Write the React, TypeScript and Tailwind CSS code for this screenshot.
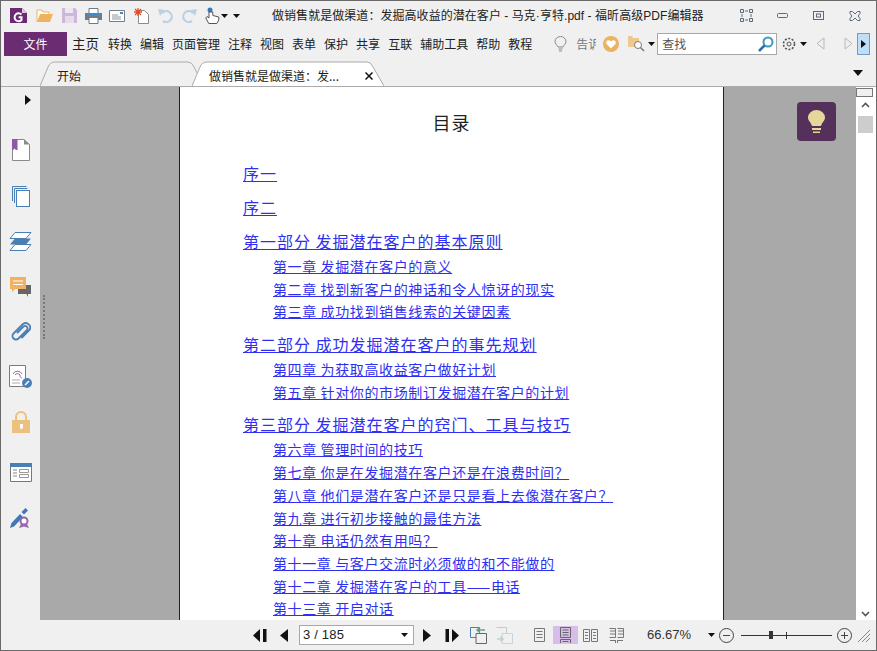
import React from "react";

const Caret = ({ className = "" }: { className?: string }) => (
  <svg width="7" height="4" viewBox="0 0 7 4" className={className}><path d="M0 0h7L3.500 4z" fill="#111" /></svg>
);

const Logo = () => (
  <svg width="17" height="17" viewBox="0 0 17 17"><path d="M0 1h12l5 5v10H0z" fill="#6b2a72" /><path d="M12 1v5h5z" fill="#d9c6dd" /><path d="M11.500 7.500a4 4 0 1 0 0 5.500V10.200H8.600" fill="none" stroke="#fff" strokeWidth="2" /></svg>
);
const Folder = () => (
  <svg width="17" height="14" viewBox="0 0 17 14"><path d="M1 13V1h5l1 2h6v2" fill="#fff" stroke="#e8b665" /><path d="M1 13l3-8h13l-3 8z" fill="#efb35f" /></svg>
);
const Save = () => (
  <svg width="15" height="15" viewBox="0 0 15 15"><path d="M0 0h13l2 2v13H0z" fill="#cdb8dc" /><path d="M3 0h8v5H3z" fill="#efe8f3" /><path d="M3 8h9v7H3z" fill="#e6dcec" /></svg>
);
const Printer = () => (
  <svg width="17" height="16" viewBox="0 0 17 16"><path d="M4 .5h9v5H4z" fill="#fff" stroke="#6d7a88" /><path d="M0 5h17v7H0z" fill="#717c88" /><path d="M3 6h11v1.500H3z" fill="#3f8fd0" /><path d="M4 9.500h9v6H4z" fill="#fff" stroke="#6d7a88" /></svg>
);
const Mail = () => (
  <svg width="16" height="12" viewBox="0 0 16 12"><path d="M.5.500h15v11H.5z" fill="#fff" stroke="#747e88" /><path d="M3 5h6M3 7h9M3 9h9" stroke="#8c96a0" /><path d="M11 2h3v2h-3z" fill="#4a86c4" /></svg>
);
const Spark = () => (
  <svg width="15" height="16" viewBox="0 0 15 16"><path d="M4.500 2.500h6l4 4v9h-10z" fill="#fff" stroke="#8b8b8b" /><path d="M4 0v8M0 4h8M1 1l6 6M7 1L1 7" stroke="#e2502a" strokeWidth="1.300" /></svg>
);
const Undo = ({ flip = false }: { flip?: boolean }) => (
  <svg width="16" height="15" viewBox="0 0 16 15" className={flip ? "-scale-x-100" : ""}><path d="M4 5a5.500 5.500 0 1 1 1 8" fill="none" stroke="#b9d0e5" strokeWidth="2.200" /><path d="M0 1l6.500 1L2 8z" fill="#b9d0e5" /></svg>
);
const Hand = () => (
  <svg width="15" height="18" viewBox="0 0 15 18"><circle cx="5" cy="3" r="2.500" fill="#3a78bd" /><path d="M4 5v6L2 9.500 0.800 11l3 5.500h8l2-3.500v-3l-6-1.500V5z" fill="#fff" stroke="#555" /></svg>
);
const Bulb = () => (
  <svg width="13" height="16" viewBox="0 0 13 16"><path d="M4 11C3 8.500 1 8 1 5.500a5.500 5 0 0 1 11 0C12 8 10 8.500 9 11zM4.500 13h4M5 15h3" fill="none" stroke="#8a8a8a" /></svg>
);
const Heart = () => (
  <svg width="16" height="16" viewBox="0 0 16 16"><circle cx="8" cy="8" r="8" fill="#ecb25f" /><path d="M8 12.500L3.500 8C2 5 6 3 8 5.500 10 3 14 5 12.500 8z" fill="#fff" /></svg>
);
const FolderSearch = () => (
  <svg width="17" height="17" viewBox="0 0 17 17"><path d="M0 1h4l1 2h6v9H0z" fill="#eec88f" /><circle cx="10" cy="10" r="3.500" fill="#fff" stroke="#777" /><path d="M12.500 12.500L16 16" stroke="#777" strokeWidth="1.500" /></svg>
);
const Magnifier = () => (
  <svg width="16" height="16" viewBox="0 0 16 16"><circle cx="10" cy="6" r="4.500" fill="#fff" stroke="#3a9ac4" strokeWidth="2" /><path d="M6.500 9.500L1 15" stroke="#2f6ca8" strokeWidth="2.500" /></svg>
);
const Gear = () => (
  <svg width="14" height="14" viewBox="0 0 14 14"><circle cx="7" cy="7" r="2" fill="none" stroke="#555" /><circle cx="7" cy="7" r="5.500" fill="none" stroke="#555" strokeWidth="1.600" strokeDasharray="2 1.500" /></svg>
);
const Tri = ({ d, fill, stroke }: { d: string; fill: string; stroke?: string }) => (
  <svg width="9" height="13" viewBox="0 0 9 13"><path d={d} fill={fill} stroke={stroke} /></svg>
);
const MenuItem = ({ t }: { t: string }) => <span className="text-[12px] text-[#222]">{t}</span>;

const Tab = ({ w, active, children }: { w: string; active?: boolean; children: React.ReactNode }) => (
  <div className={`relative h-[25px] flex items-center shrink-0 pt-[5px] ${w}`}>
    {active ? (
      <svg className="absolute inset-0" width="192" height="25" viewBox="0 0 192 25"><path d="M0 25L8 6Q10 1 15 1H175Q179 1 181 6L192 25z" fill="#fff" /><path d="M0 25L8 6Q10 1 15 1H175Q179 1 181 6L192 25" fill="none" stroke="#ababab" /></svg>
    ) : (
      <svg className="absolute inset-0" width="157" height="25" viewBox="0 0 157 25"><path d="M0 25L8 6Q10 1 15 1H148Q152 1 154 6L157 12" fill="none" stroke="#ababab" /></svg>
    )}
    <div className="relative w-full flex items-center">{children}</div>
  </div>
);

const SideBtn = ({ children, mt }: { children: React.ReactNode; mt: string }) => (
  <div className={`flex items-center justify-center w-full h-[30px] shrink-0 ${mt}`}>{children}</div>
);

const parts = [
  { t: "序一", k: "p", m: "" }, { t: "序二", k: "p", m: "mt-[9px]" },
  { t: "第一部分 发掘潜在客户的基本原则", k: "p", m: "mt-[9px]" },
  { t: "第一章 发掘潜在客户的意义", k: "c" }, { t: "第二章 找到新客户的神话和令人惊讶的现实", k: "c" }, { t: "第三章 成功找到销售线索的关键因素", k: "c" },
  { t: "第二部分 成功发掘潜在客户的事先规划", k: "p", m: "mt-[10px]" },
  { t: "第四章 为获取高收益客户做好计划", k: "c" }, { t: "第五章 针对你的市场制订发掘潜在客户的计划", k: "c" },
  { t: "第三部分 发掘潜在客户的窍门、工具与技巧", k: "p", m: "mt-[10px]" },
  { t: "第六章 管理时间的技巧", k: "c" }, { t: "第七章 你是在发掘潜在客户还是在浪费时间？", k: "c" }, { t: "第八章 他们是潜在客户还是只是看上去像潜在客户？", k: "c" },
  { t: "第九章 进行初步接触的最佳方法", k: "c" }, { t: "第十章 电话仍然有用吗？", k: "c" }, { t: "第十一章 与客户交流时必须做的和不能做的", k: "c" },
  { t: "第十二章 发掘潜在客户的工具——电话", k: "c" }, { t: "第十三章 开启对话", k: "c" },
];

export default function App() {
  return (
    <div className="w-[877px] h-[651px] overflow-hidden border border-[#6a6a6a] bg-[#f0f0f0] flex flex-col text-[#222]" style={{ fontFamily: '"Noto Sans CJK SC", sans-serif' }}>
      {/* title bar */}
      <div className="h-[29px] shrink-0 flex items-center relative">
        <div className="ml-[9px] flex items-center">
          <Logo />
          <div className="ml-[9px]"><Folder /></div>
          <div className="ml-[9px]"><Save /></div>
          <div className="ml-[8px]"><Printer /></div>
          <div className="ml-[7px]"><Mail /></div>
          <div className="ml-[9px]"><Spark /></div>
          <div className="ml-[9px]"><Undo /></div>
          <div className="ml-[7px]"><Undo flip /></div>
          <div className="ml-[8px]"><Hand /></div>
          <Caret className="ml-[1px]" />
          <Caret className="ml-[5px]" />
        </div>
        <div className="ml-[32px] text-[12px] tracking-[0.050px] whitespace-nowrap text-[#222]" style={{ fontFamily: '"Liberation Sans", "Noto Sans CJK SC", sans-serif' }}>做销售就是做渠道：发掘高收益的潜在客户 - 马克·亨特.pdf - 福昕高级PDF编辑器</div>
        <div className="ml-auto mr-[15px] flex items-center">
          <svg width="13" height="13" viewBox="0 0 13 13" fill="none" stroke="#5a6a7a"><path d="M.5.500h3v3h-3zM9.500.500h3v3h-3zM.5 9.500h3v3h-3zM9.500 9.500h3v3h-3z" /><path d="M5 2h3M5 11h3M2 5v3M11 5v3" /></svg>
          <svg className="ml-[24px]" width="11" height="5" viewBox="0 0 11 5" fill="none" stroke="#5a6a7a"><rect x=".5" y=".5" width="10" height="4" rx="1" /></svg>
          <svg className="ml-[25px]" width="11" height="9" viewBox="0 0 11 9" fill="none" stroke="#5a6a7a"><rect x=".5" y=".5" width="10" height="8" /><rect x="3.500" y="3" width="4" height="3" /></svg>
          <svg className="ml-[25px]" width="12" height="10" viewBox="0 0 12 10" fill="none" stroke="#5a6a7a"><path d="M1 .5h2.500L6 3l2.500-2.500H11v2L9 5l2 2.500v2H8.500L6 7 3.500 9.500H1v-2L3 5 1 2.500z" /></svg>
        </div>
      </div>

      {/* ribbon menu */}
      <div className="h-[27px] shrink-0 flex items-center">
        <div className="ml-[3px] w-[63px] h-[24px] bg-[#6b2c72] text-white text-[12px] flex items-center justify-center">文件</div>
        <span className="ml-[5px] text-[13.500px] text-[#222]">主页</span>
        <div className="ml-[9px] flex items-center gap-[8px]">
          {["转换", "编辑", "页面管理", "注释", "视图", "表单", "保护", "共享", "互联", "辅助工具", "帮助", "教程"].map((m) => <MenuItem key={m} t={m} />)}
        </div>
        <div className="ml-[22px]"><Bulb /></div>
        <span className="ml-[9px] w-[20px] overflow-hidden whitespace-nowrap text-[12px] text-[#777]">告诉</span>
        <div className="ml-[7px]"><Heart /></div>
        <div className="ml-[9px]"><FolderSearch /></div>
        <Caret className="ml-[3px]" />
        <div className="ml-[2px] w-[120px] h-[22px] bg-white border border-[#a8a8a8] flex items-center pl-[4px] pr-[2px] justify-between">
          <span className="text-[12px] text-[#555]">查找</span>
          <Magnifier />
        </div>
        <div className="ml-[5px]"><Gear /></div>
        <Caret className="ml-[4px]" />
        <div className="ml-[9px]"><Tri d="M8 1L1 6.500 8 12z" fill="#f0f0f0" stroke="#b8b8b8" /></div>
        <div className="ml-[19px]"><Tri d="M1 1l7 5.500L1 12z" fill="#f0f0f0" stroke="#b8b8b8" /></div>
        <div className="ml-[4px] w-[13px] h-[22px] bg-[#bfdff8] border border-[#6f9cc4] flex items-center justify-center">
          <svg width="5" height="8" viewBox="0 0 5 8"><path d="M0 0l5 4-5 4z" fill="#111" /></svg>
        </div>
      </div>

      {/* tab row */}
      <div className="h-[30px] shrink-0 flex items-end border-b border-[#ababab] relative">
        <div className="ml-[39px] flex items-end">
          <Tab w="w-[152px]"><span className="ml-[17px] text-[12px] text-[#222]">开始</span></Tab>
          <Tab w="w-[192px]" active>
            <span className="ml-[17px] text-[12px] text-[#222] whitespace-nowrap">做销售就是做渠道：发...</span>
            <svg className="ml-[26px]" width="8" height="8" viewBox="0 0 8 8"><path d="M.5.500l7 7M7.500.500l-7 7" stroke="#111" strokeWidth="1.500" /></svg>
          </Tab>
        </div>
        <svg className="ml-auto mr-[13px] mb-[10px]" width="10" height="6" viewBox="0 0 10 6"><path d="M0 0h10L5 6z" fill="#111" /></svg>
      </div>

      {/* body */}
      <div className="flex-1 min-h-0 flex">
        <div className="w-[39px] shrink-0 bg-[#f0f0f0] flex flex-col">
          <div className="h-[25px] flex items-center justify-end pr-[9px] shrink-0">
            <svg width="6" height="10" viewBox="0 0 6 10"><path d="M0 0l6 5-6 5z" fill="#111" /></svg>
          </div>
          <div className="flex flex-col">
            <SideBtn mt="mt-[23px]">
              <svg width="18" height="22" viewBox="0 0 18 22"><path d="M.5.500h11.500l5.500 5v16H.5z" fill="#fff" stroke="#8a8a8a" /><path d="M12 .5v5h5.500z" fill="#8a8a8a" /><path d="M0 0h5.500v11H4l-1.500-1.500L1 11H0z" fill="#8f58a9" /></svg>
            </SideBtn>
            <SideBtn mt="mt-[16px]">
              <svg width="18" height="21" viewBox="0 0 18 21" fill="none" stroke="#4a7fb5"><path d="M.5 15V.5h14" /><path d="M2.500 17V2.500h13" /><rect x="4.500" y="4.500" width="13" height="16" fill="#fff" /></svg>
            </SideBtn>
            <SideBtn mt="mt-[15px]">
              <svg width="23" height="19" viewBox="0 0 23 19"><path d="M6 .5h16l-5 6H1z" fill="#fff" stroke="#4a7fb5" /><path d="M6 12.500h16l-5 6H1z" fill="#fff" stroke="#4a7fb5" /><path d="M6 6.500h16l-5 6H1z" fill="#4a7fb5" /></svg>
            </SideBtn>
            <SideBtn mt="mt-[16px]">
              <svg width="22" height="21" viewBox="0 0 22 21"><path d="M8 8h13v9h-3v3l-1.500-3H8z" fill="#666" /><path d="M0 0h16v12H5l-3 3v-3H0z" fill="#f0b262" /><path d="M3 4h10M3 7.500h10" stroke="#fff" /></svg>
            </SideBtn>
            <SideBtn mt="mt-[14px]">
              <svg width="20" height="21" viewBox="0 0 20 21"><path d="M6.500 11.500L12.500 5.500a2.500 2.500 0 0 1 3.500 3.500L7.500 17.500a3.500 3.500 0 0 1-5-5L12 3a4.500 4.500 0 0 1 6.500 6L11 16.500" fill="none" stroke="#4a7fb5" strokeWidth="1.800" strokeLinecap="round" /></svg>
            </SideBtn>
            <SideBtn mt="mt-[15px]">
              <svg width="23" height="23" viewBox="0 0 23 23"><path d="M.5.500h16v21H.5z" fill="#fff" stroke="#7a7a7a" /><path d="M4 9a5 5 0 0 1 9 0M6 10a3 3 0 0 1 5 0c0 2 0 2 2 3" fill="none" stroke="#9568ad" /><path d="M3 15h8M3 18h8" stroke="#aaa" /><circle cx="18" cy="18" r="5" fill="#4a7fb5" /><path d="M16 20l4-4" stroke="#fff" strokeWidth="1.500" /></svg>
            </SideBtn>
            <SideBtn mt="mt-[16px]">
              <svg width="18" height="22" viewBox="0 0 18 22"><path d="M4 9V6a5 5 0 0 1 10 0v3" fill="none" stroke="#ecc07f" strokeWidth="2" /><path d="M0 9h18v13H0z" fill="#ecc07f" /><path d="M8 13h3v2l-.5 3h-2L8 15z" fill="#fff" /></svg>
            </SideBtn>
            <SideBtn mt="mt-[20px]">
              <svg width="22" height="19" viewBox="0 0 22 19"><path d="M.5.500h21v18H.5z" fill="#fff" stroke="#777" /><path d="M0 0h22v4H0z" fill="#4a7fb5" /><path d="M3 7h4M3 10h4M3 13h4" stroke="#888" /><path d="M9.500 6.500h9v3h-9zM9.500 11.500h9v3h-9z" fill="none" stroke="#999" /></svg>
            </SideBtn>
            <SideBtn mt="mt-[16px]">
              <svg width="21" height="22" viewBox="0 0 21 22"><path d="M0 21l1.500-5L10 7l3 3-9 9.500z" fill="#3f78b8" /><path d="M11.500 5l4-4 2.500 2.500-4 4z" fill="#3f78b8" /><circle cx="14" cy="14" r="3.500" fill="#fff" stroke="#9568ad" strokeWidth="2" /><path d="M11 17l-2 4 5-1.500 5 1.500-2-4z" fill="#9568ad" /></svg>
            </SideBtn>
          </div>
        </div>

        <div className="flex-1 bg-[#a9a9a9] flex relative min-w-0">
          <div className="w-[139px] shrink-0 flex items-center pb-[74px] pl-[3px]">
            <div className="w-[2px] h-[44px] border-l-2 border-dotted border-[#777]" />
          </div>
          <div className="w-[545px] shrink-0 bg-white border-x border-[#222] overflow-hidden">
            <div className="h-[75px] pt-[23px] flex justify-center">
              <span className="text-[18px] leading-[24px] tracking-[1px] text-[#222]">目录</span>
            </div>
            <div className="pl-[63px] flex flex-col">
              {parts.map((p, i) =>
                p.k === "p" ? (
                  <a key={i} className={`text-[16px] h-[25px] leading-[23px] tracking-[1px] whitespace-nowrap underline text-[#2f2ff2] ${p.m}`}>{p.t}</a>
                ) : (
                  <a key={i} className="ml-[30px] text-[14px] h-[22.700px] leading-[22.700px] tracking-[0.620px] whitespace-nowrap underline text-[#2f2ff2]">{p.t}</a>
                )
              )}
            </div>
          </div>
          <div className="flex-1" />
          <div className="absolute left-[757px] top-[15px] w-[39px] h-[39px] rounded-[4px] bg-[#55305a] flex items-center justify-center">
            <svg width="17" height="24" viewBox="0 0 17 24"><path d="M4 16C3 12 0 11 0 7.500a8.500 7.500 0 0 1 17 0C17 11 14 12 13 16z" fill="#e3d89a" /><path d="M4 18h9v2H4zM5 21.500h7V23H5z" fill="#e3d89a" /></svg>
          </div>
          <div className="w-[20px] shrink-0 bg-white flex flex-col items-center">
            <div className="w-[17px] h-[9px] mt-[1px] mr-[3px] bg-[#f0f0f0] border border-[#777]" />
            <svg className="mt-[5px] mr-[2px]" width="9" height="6" viewBox="0 0 9 6" fill="none" stroke="#555" strokeWidth="1.600"><path d="M1 5l3.500-3.500L8 5" /></svg>
            <div className="w-[15px] h-[17px] mt-[8px] mr-[2px] bg-[#cdcdcd]" />
            <svg className="mt-auto mb-[3px] mr-[2px]" width="9" height="6" viewBox="0 0 9 6" fill="none" stroke="#555" strokeWidth="1.600"><path d="M1 1l3.500 3.500L8 1" /></svg>
          </div>
        </div>
      </div>

      {/* status bar */}
      <div className="h-[30px] shrink-0 flex items-center relative">
        <div className="ml-[252px] flex items-center">
          <svg width="14" height="13" viewBox="0 0 14 13"><path d="M7 0v13L0 6.500zM10 0h3.500v13H10z" fill="#111" /></svg>
          <svg className="ml-[13px]" width="8" height="13" viewBox="0 0 8 13"><path d="M8 0v13L0 6.500z" fill="#111" /></svg>
          <div className="ml-[11px] w-[115px] h-[20px] bg-white border border-[#a8a8a8] flex items-center pl-[3px] pr-[5px] justify-between">
            <span className="text-[13px] tracking-[0.200px] text-[#222]" style={{ fontFamily: '"Liberation Sans", sans-serif' }}>3 / 185</span>
            <Caret />
          </div>
          <svg className="ml-[9px]" width="8" height="13" viewBox="0 0 8 13"><path d="M0 0v13l8-6.500z" fill="#111" /></svg>
          <svg className="ml-[14px]" width="14" height="13" viewBox="0 0 14 13"><path d="M7 0v13l7-6.500zM.5 0H4v13H.5z" fill="#111" /></svg>
          <svg className="ml-[11px]" width="17" height="17" viewBox="0 0 17 17"><path d="M.5.500h9v10h-9z" fill="none" stroke="#4a7fb5" /><path d="M6 6.500h10.500v10H6z" fill="#f0f0f0" stroke="#666" /><path d="M7 3h8M10 .5L7 3l3 2.500" fill="none" stroke="#5fa58c" strokeWidth="1.500" /></svg>
          <svg className="ml-[9px]" width="17" height="17" viewBox="0 0 17 17"><path d="M.5.500h10v8" fill="none" stroke="#c8c8c8" /><path d="M6 6.500h10.500v10H6z" fill="#f0f0f0" stroke="#c4d4e2" /><path d="M1 12h6M4.500 9.500L7 12l-2.500 2.500" fill="none" stroke="#b9d5c9" strokeWidth="1.500" /></svg>
          <svg className="ml-[21px]" width="11" height="14" viewBox="0 0 11 14" fill="none" stroke="#777"><path d="M.5.500h10v13H.5zM2.500 3.500h6M2.500 6.500h6M2.500 9.500h6" /></svg>
          <div className="ml-[8px] w-[25px] h-[18px] bg-[#d8bde8] flex flex-col items-center justify-start pt-[1px]">
            <svg width="11" height="16" viewBox="0 0 11 16" fill="none" stroke="#666"><path d="M.5.500h10v10H.5zM2.500 3h6M2.500 5.500h6M2.500 8h6M.5 16v-3.500h10V16M2.500 14.500h6" /></svg>
          </div>
          <svg className="ml-[5px]" width="15" height="13" viewBox="0 0 15 13" fill="none" stroke="#777"><path d="M.5.500h6v12h-6zM8.500.500h6v12h-6zM2 3.500h3M2 6.500h3M2 9.500h3M10 3.500h3M10 6.500h3M10 9.500h3" /></svg>
          <svg className="ml-[11px]" width="15" height="16" viewBox="0 0 15 16" fill="none" stroke="#777"><path d="M.5 1.500h6v9h-6M8.500 1.500h6v9h-6M1 4h5M1 7h5M9 4h5M9 7h5M1 13.500h5M9 13.500h5M6.500 13v3M8.500 13v3" /></svg>
          <span className="ml-[23px] w-[44px] text-[13px] text-[#333]" style={{ fontFamily: '"Liberation Sans", sans-serif' }}>66.67%</span>
          <Caret className="ml-[17px]" />
          <svg className="ml-[4px]" width="15" height="15" viewBox="0 0 15 15" fill="none" stroke="#444"><circle cx="7.500" cy="7.500" r="7" /><path d="M4 7.500h7" /></svg>
          <div className="ml-[7px] w-[91px] h-[11px] relative flex items-center">
            <div className="w-full h-px bg-[#333]" />
            <div className="absolute left-[28px] top-[1px] w-[4px] h-[8px] bg-[#333]" />
            <div className="absolute left-[45px] top-[2px] w-px h-[7px] bg-[#333]" />
          </div>
          <svg className="ml-[5px]" width="15" height="15" viewBox="0 0 15 15" fill="none" stroke="#444"><circle cx="7.500" cy="7.500" r="7" /><path d="M4 7.500h7M7.500 4v7" /></svg>
          <svg className="ml-[6px] mt-[2px]" width="12" height="12" viewBox="0 0 12 12" stroke="#888"><path d="M0 12L12 0M4 12l8-8M8 12l4-4" /></svg>
        </div>
      </div>
    </div>
  );
}
